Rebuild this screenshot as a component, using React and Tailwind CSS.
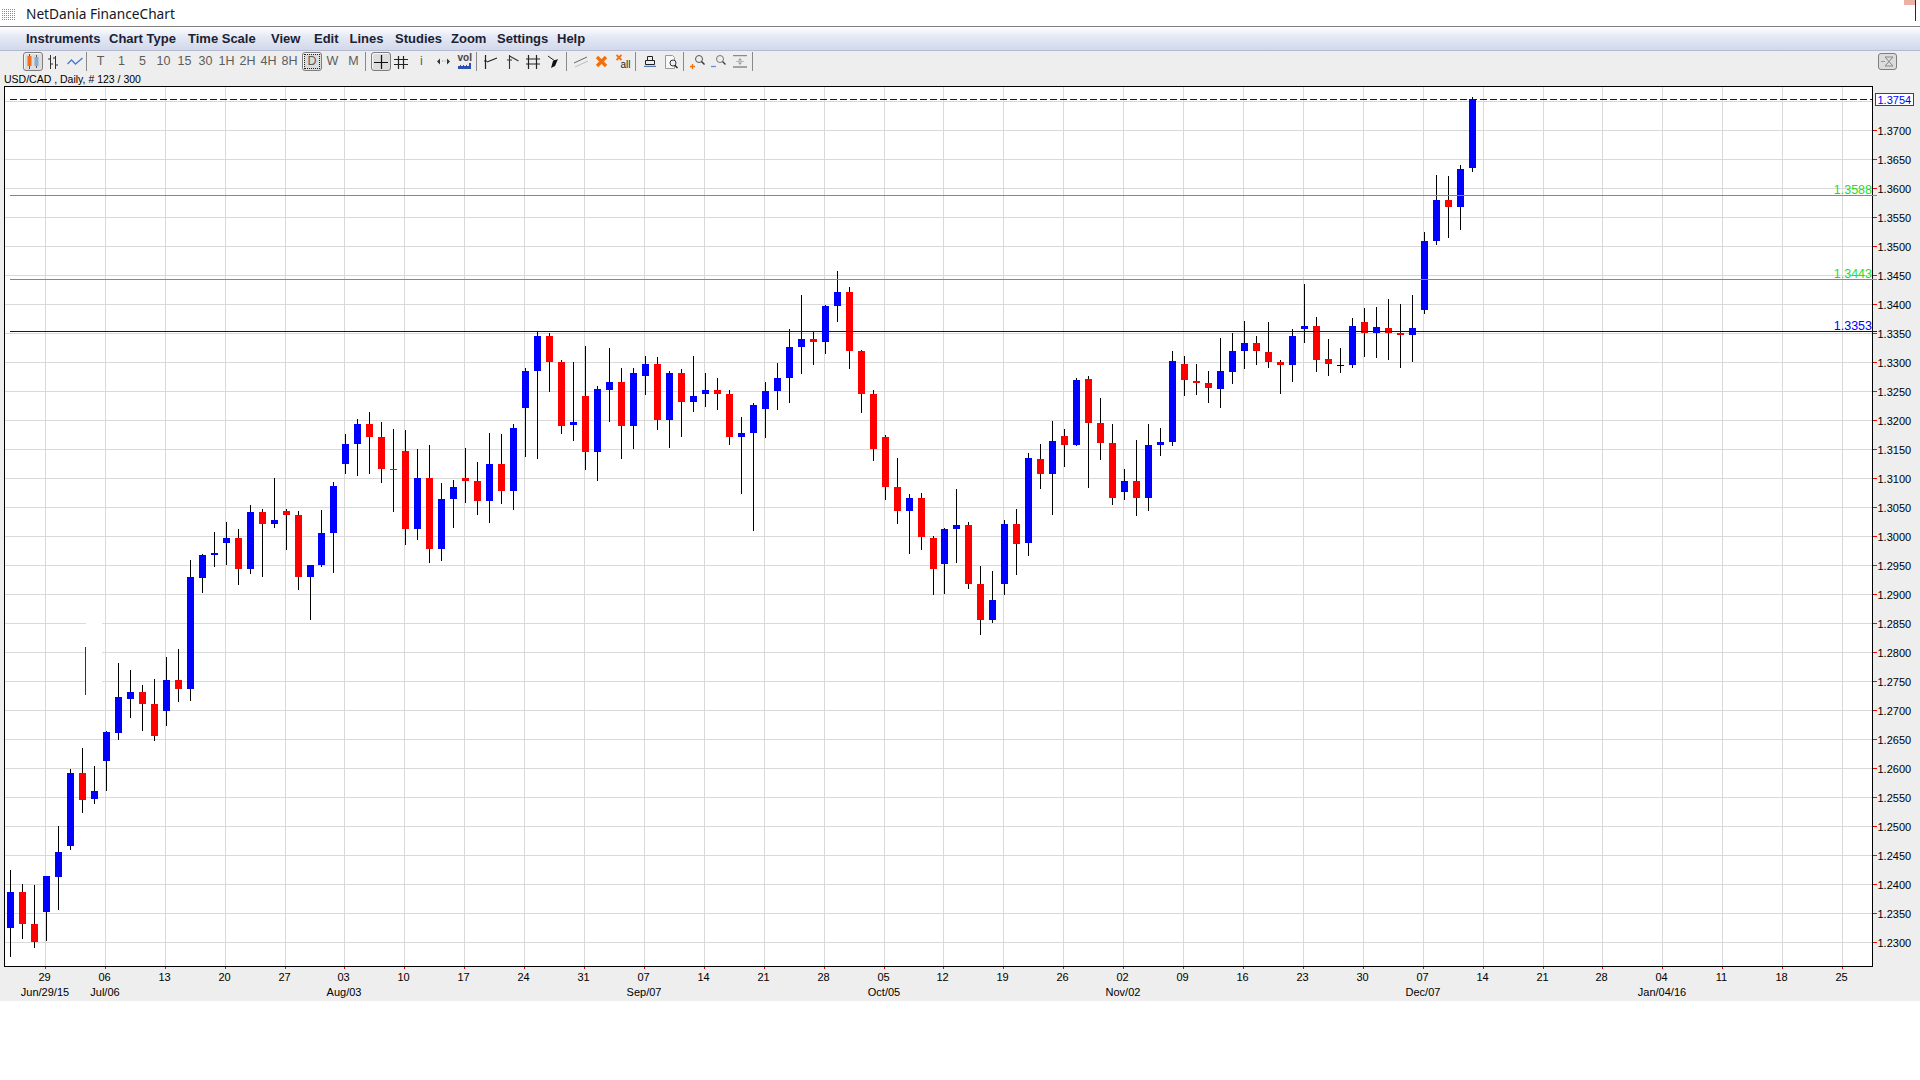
import React from "react";

// candle data: [wick x, wick top, wick bottom, body top, body bottom, colour] in 3x crop units
const seg = [
  { ox: 0, oy: 500, d: [
    [31,1110,1370,1176,1283,"b"],[67,1152,1316,1176,1271,"r"],[103,1155,1343,1272,1325,"r"],[139,1128,1322,1128,1235,"b"],
    [175,978,1229,1056,1130,"b"],[211,807,1049,819,1037,"b"],[247,744,938,819,899,"r"],[283,798,911,873,896,"b"],
    [319,693,872,696,782,"b"],[355,489,719,591,698,"b"],[391,510,653,576,596,"b"],[427,555,692,576,611,"r"],
    [463,537,722,612,707,"r"],[499,471,677,540,632,"b"],[535,447,605,540,566,"r"],[571,180,602,231,566,"b"],
    [607,162,278,165,233,"b"],[643,96,200,159,165,"b"],[679,66,194,114,129,"b"],[715,87,254,114,206,"r"],
    [751,15,221,36,206,"b"],[787,27,230,36,71,"r"],[823,-66,83,60,72,"b"],[859,27,149,33,44,"r"],
    [895,33,269,45,230,"r"],[931,195,359,195,230,"b"],[964,30,200,99,194,"b"],[1000,-54,218,-42,98,"b"],
  ]},
  { ox: 320, oy: 320, d: [
    [76,342,462,372,432,"b"],[112,297,468,312,372,"b"],[148,276,462,312,351,"r"],[184,306,489,351,447,"r"],
    [220,327,576,447,450,"r"],[256,330,675,393,627,"r"],[292,387,660,474,627,"b"],[328,375,729,474,687,"r"],
    [364,489,723,537,687,"b"],[400,480,624,501,537,"b"],[436,384,549,474,483,"r"],[472,426,585,483,543,"r"],
    [508,339,609,432,543,"b"],[544,342,552,432,513,"r"],[580,312,570,324,513,"b"],[616,144,411,153,264,"b"],
    [652,36,417,48,153,"b"],[688,39,216,48,126,"r"],[724,120,342,126,318,"r"],[760,126,363,306,315,"b"],
    [796,78,450,228,396,"r"],[832,198,483,207,396,"b"],[868,84,306,186,210,"b"],[904,144,417,186,318,"r"],
    [940,144,387,159,318,"b"],[976,108,225,132,168,"b"],[1012,111,330,132,300,"r"],[1048,153,384,159,300,"b"],
    [1084,147,351,159,246,"r"],[1120,108,276,228,246,"b"],[1156,159,261,210,222,"b"],[1192,174,270,210,222,"r"],
  ]},
  { ox: 700, oy: 260, d: [
    [88,390,555,402,531,"r"],[124,471,702,519,531,"b"],[160,429,813,435,519,"b"],[196,366,534,393,447,"b"],
    [232,309,450,354,393,"b"],[268,207,429,261,354,"b"],[304,105,342,237,261,"b"],[340,216,315,237,246,"r"],
    [376,135,282,138,246,"b"],[412,33,186,96,138,"b"],[448,81,327,96,273,"r"],[484,270,459,273,402,"r"],
    [520,390,603,402,567,"r"],[556,525,720,531,681,"r"],[592,594,792,681,753,"r"],[628,702,882,714,753,"b"],
    [664,699,870,714,831,"r"],
  ]},
  { ox: 880, oy: 400, d: [
    [160,408,585,414,507,"r"],[193,384,582,387,492,"b"],[229,267,489,375,387,"b"],[265,366,567,375,552,"r"],
    [301,498,705,552,660,"r"],[337,513,669,600,660,"b"],[373,360,585,372,552,"b"],[409,327,525,372,432,"r"],
    [445,159,468,174,429,"b"],[481,132,267,177,222,"r"],[517,63,345,123,222,"b"],[553,87,201,108,135,"r"],
    [589,-66,138,-60,135,"b"],[625,-72,264,-63,69,"r"],[661,-6,180,69,129,"r"],[697,72,315,129,294,"r"],
    [733,207,300,243,276,"b"],[769,120,348,243,294,"r"],[805,72,333,135,294,"b"],[841,84,168,126,135,"b"],
  ]},
  { ox: 1100, oy: 310, d: [
    [217,123,408,153,396,"b"],[253,138,258,162,210,"r"],[289,162,255,213,219,"r"],[325,183,279,219,234,"r"],
    [361,84,294,183,237,"b"],[397,69,222,123,186,"b"],[433,33,177,99,123,"b"],[469,78,165,99,123,"r"],
    [505,36,174,126,156,"r"],[541,150,252,156,165,"r"],[577,57,216,78,165,"b"],
  ]},
  { ox: 1200, oy: 80, d: [
    [313,612,789,738,747,"b"],[349,711,876,738,840,"r"],[385,777,888,837,852,"r"],[421,804,879,855,858,"k"],
    [457,714,864,738,855,"b"],[493,684,831,726,759,"r"],[529,681,834,741,759,"b"],[565,657,840,744,759,"r"],
    [601,672,864,759,765,"r"],[637,645,846,744,765,"b"],[673,456,702,483,690,"b"],[709,285,495,360,483,"b"],
    [745,288,474,360,381,"r"],[781,255,450,267,381,"b"],[817,51,276,57,264,"b"],
  ]},
];

const candles = seg.flatMap((s) =>
  s.d.map(([x, wt, wb, bt, bb, c]) => ({
    x: Math.floor(s.ox + x / 3),
    wt: Math.round(s.oy + wt / 3),
    wb: Math.round(s.oy + wb / 3),
    bt: Math.round(s.oy + bt / 3),
    bb: Math.round(s.oy + bb / 3),
    c: c === "b" ? "#0000ff" : c === "r" ? "#ff0000" : "#000000",
  }))
);

const gridX = [45,105,165,225,285,344,404,464,524,584,644,704,764,824,884,943,1003,1063,1123,1183,1243,1303,1363,1423,1483,1543,1602,1662,1722,1782,1842];
const dayLabels = ["29","06","13","20","27","03","10","17","24","31","07","14","21","28","05","12","19","26","02","09","16","23","30","07","14","21","28","04","11","18","25"];
const monthLabels = [[45,"Jun/29/15"],[105,"Jul/06"],[344,"Aug/03"],[644,"Sep/07"],[884,"Oct/05"],[1123,"Nov/02"],[1423,"Dec/07"],[1662,"Jan/04/16"]];
const gridY = Array.from({ length: 30 }, (_, k) => 942 - 29 * k);
const priceOf = (k) => (1.23 + 0.005 * k).toFixed(4);

function Chart() {
  return (
    <svg width="1920" height="915" viewBox="0 86 1920 915" className="block" shapeRendering="crispEdges">
      <rect x="4" y="86" width="1869" height="881" fill="#000000" />
      <rect x="5" y="87" width="1867" height="879" fill="#ffffff" />
      {gridY.map((y) => <rect key={y} x="5" y={y} width="1867" height="1" fill="#d9d9d9" />)}
      {gridX.map((x) => <rect key={x} x={x} y="87" width="1" height="879" fill="#d9d9d9" />)}
      <rect x="86" y="616" width="16" height="66" fill="#ffffff" />
      <rect x="85" y="647" width="1" height="48" fill="#24344f" />
      {candles.map((c, i) => (
        <g key={i}>
          <rect x={c.x} y={c.wt} width="1" height={c.wb - c.wt} fill="#000000" />
          <rect x={c.x - 3} y={c.bt} width="7" height={Math.max(1, c.bb - c.bt)} fill={c.c} />
        </g>
      ))}
      <line x1="10" x2="1872" y1="99.5" y2="99.5" stroke="#0000dd" strokeWidth="1" strokeDasharray="7 3" />
      <rect x="10" y="195" width="1867" height="1" fill="#19d419" />
      <rect x="10" y="279" width="1867" height="1" fill="#19d419" />
      <rect x="10" y="331" width="1867" height="1" fill="#0000d8" />
      {gridY.slice(0, 29).map((y) => <rect key={y} x="1873" y={y} width="4" height="1" fill="#ff0000" />)}
      {gridX.map((x) => <rect key={x} x={x} y="967" width="1" height="2" fill="#ff0000" />)}
      <g shapeRendering="auto" fontSize="11" fill="#000000">
        {gridY.slice(0, 29).map((y, k) => <text key={y} x="1877.5" y={y + 5}>{priceOf(k)}</text>)}
        {gridX.map((x, i) => <text key={x} x={x - 0.5} y="981" textAnchor="middle">{dayLabels[i]}</text>)}
        {monthLabels.map(([x, t]) => <text key={t} x={x} y="996" textAnchor="middle">{t}</text>)}
        <text x="1872" y="194" fontSize="12.5" fill="#22e022" textAnchor="end">1.3588</text>
        <text x="1872" y="278" fontSize="12.5" fill="#22e022" textAnchor="end">1.3443</text>
        <text x="1872" y="330" fontSize="12.5" fill="#0000ff" textAnchor="end">1.3353</text>
      </g>
      <rect x="1875.5" y="93.5" width="38" height="12" fill="#ffffff" stroke="#e00000" strokeWidth="1" />
      <text x="1877.5" y="104" fontSize="11" fill="#0000ff" shapeRendering="auto">1.3754</text>
    </svg>
  );
}

const Sep = ({ className = "" }) => <div className={"w-px h-[19px] bg-[#8a8a8a] " + className} />;

const Raised = ({ className = "", children }) => (
  <div className={"h-[19px] w-[20px] flex items-center justify-center rounded-[3px] border border-[#7e7e7e] bg-[#dddddd] shadow-[inset_1px_1px_0_#f6f6f6] " + className}>
    {children}
  </div>
);

const Cell = ({ className = "", children }) => (
  <div className={"h-full flex items-center justify-center text-[12.5px] text-[#5c5c5c] " + className}>{children}</div>
);

const Ico = ({ w = 16, h = 16, children }) => (
  <svg width={w} height={h} viewBox={`0 0 ${w} ${h}`} fill="none">{children}</svg>
);

function Toolbar() {
  return (
    <div className="h-[21px] flex items-center pl-[23px] pr-[23px]">
      <Raised>
        <Ico w={14} h={15}>
          <path d="M3.5 0v15M10.5 1v13" stroke="#555" />
          <rect x="1.5" y="2" width="4" height="10" fill="#f07020" />
          <rect x="8.5" y="3" width="4" height="9" fill="#8aa9d6" />
        </Ico>
      </Raised>
      <Cell className="w-[20px]">
        <Ico w={12} h={14}>
          <path d="M3.5 0v14M8.5 1v13M1 4h2.500M3.500 9h2.500M6 3h2.500M8.500 10h2.500" stroke="#333" />
        </Ico>
      </Cell>
      <Cell className="w-[23px]">
        <Ico w={16} h={10}>
          <path d="M0.500 7l4-4 4 4 7-6" stroke="#4a78c8" strokeWidth="1.300" />
        </Ico>
      </Cell>
      <Sep />
      <div className="ml-[3px] flex h-full">
        {["T","1","5","10","15","30","1H","2H","4H","8H"].map((t) => (
          <Cell key={t} className="w-[21px]">{t}</Cell>
        ))}
      </div>
      <Raised className="ml-[2px] text-[12.5px] text-[#5c5c5c]">
        <div className="w-[16px] h-[15px] border border-dotted border-[#222] flex items-center justify-center leading-none">D</div>
      </Raised>
      <Cell className="w-[21px]">W</Cell>
      <Cell className="w-[21px]">M</Cell>
      <Sep className="ml-px" />
      <Raised className="ml-[5px]">
        <Ico w={16} h={16}>
          <path d="M8.500 1v14M1 8.500h14" stroke="#111" strokeWidth="1.200" />
        </Ico>
      </Raised>
      <Cell className="w-[19px]">
        <Ico w={14} h={14}>
          <path d="M4.500 1v13M9.500 1v13M0 4.500h14M0 9.500h14" stroke="#222" strokeWidth="1.200" />
        </Ico>
      </Cell>
      <Cell className="w-[23px]">i</Cell>
      <Cell className="w-[20px]">
        <Ico w={13} h={7}>
          <path d="M0 3.500l3-3v6zM13 3.500l-3-3v6z" fill="#333" />
          <path d="M5 3h1M7.500 3h1" stroke="#888" />
        </Ico>
      </Cell>
      <Cell className="w-[22px]">
        <div className="relative w-[13px] h-[14px]">
          <span className="absolute -top-[2px] left-0 text-[10px] leading-[10px] font-bold text-[#444]">vol</span>
          <svg className="absolute bottom-0 left-0" width="13" height="6" viewBox="0 0 13 6">
            <path d="M0 6V3h2V2h1v1h2v-1h1v1h2V2h1v1h2V0h2v6z" fill="#2f4fb0" />
          </svg>
        </div>
      </Cell>
      <Sep className="ml-px" />
      <Cell className="ml-[3px] w-[21px]">
        <Ico w={15} h={14}>
          <path d="M2.500 0v14M1 6h3M4 7l10-4" stroke="#222" strokeWidth="1.200" />
        </Ico>
      </Cell>
      <Cell className="w-[21px]">
        <Ico w={15} h={14}>
          <path d="M5.500 0v14M3 5h5M5.500 1l9 5" stroke="#333" strokeWidth="1.100" />
        </Ico>
      </Cell>
      <Cell className="w-[21px]">
        <Ico w={14} h={14}>
          <path d="M2.500 0v14M10.500 0v14M0 4h14M0 9h14" stroke="#222" strokeWidth="1.200" />
        </Ico>
      </Cell>
      <Cell className="w-[20px]">
        <Ico w={12} h={13}>
          <path d="M1 1l7 5" stroke="#222" />
          <path d="M4 13l2-7 5-2-3 7z" fill="#111" />
        </Ico>
      </Cell>
      <Sep className="ml-[3px]" />
      <Cell className="ml-[4px] w-[20px]">
        <Ico w={14} h={12}>
          <path d="M0 7l13-6" stroke="#666" />
          <path d="M1 11l13-6" stroke="#bbb" />
        </Ico>
      </Cell>
      <Cell className="w-[21px]">
        <Ico w={13} h={13}>
          <path d="M2 2l9 9M11 2l-9 9" stroke="#f07010" strokeWidth="3.200" />
        </Ico>
      </Cell>
      <Cell className="w-[21px]">
        <div className="relative w-[14px] h-[15px]">
          <svg className="absolute top-0 left-0" width="6" height="7" viewBox="0 0 6 7">
            <path d="M0.500 1l5 5M5.500 1l-5 5" stroke="#f07010" strokeWidth="1.800" />
          </svg>
          <span className="absolute bottom-[-1px] right-[-1px] text-[10px] leading-[10px] text-[#222]">all</span>
        </div>
      </Cell>
      <Sep className="ml-[2px]" />
      <Cell className="ml-[4px] w-[20px]">
        <Ico w={12} h={11}>
          <path d="M3.500 0.500h5v4h-5zM1.500 4.500h9v4h-9z" stroke="#222" />
          <path d="M0 10.500h12" stroke="#5578b0" strokeWidth="1.400" />
        </Ico>
      </Cell>
      <Cell className="w-[23px]">
        <Ico w={13} h={14}>
          <path d="M0.500 0.500h7l2 2v11h-9z" stroke="#999" fill="#f8f8f8" />
          <circle cx="8" cy="8" r="3" stroke="#333" fill="#eef" />
          <path d="M10 10.500l2.500 2.500" stroke="#222" strokeWidth="1.400" />
        </Ico>
      </Cell>
      <Sep />
      <Cell className="ml-[3px] w-[20px]">
        <Ico w={15} h={15}>
          <circle cx="9" cy="5" r="3.500" stroke="#555" />
          <path d="M11.500 7.500l3 3" stroke="#333" strokeWidth="1.400" />
          <path d="M0 12.500h5M2.500 10v5" stroke="#f07010" strokeWidth="1.300" />
        </Ico>
      </Cell>
      <Cell className="w-[23px]">
        <Ico w={15} h={15}>
          <circle cx="9" cy="5" r="3.500" stroke="#777" />
          <path d="M11.500 7.500l3 3" stroke="#444" strokeWidth="1.400" />
          <path d="M0 12.500h5" stroke="#6a8fd0" strokeWidth="1.300" />
        </Ico>
      </Cell>
      <Cell className="w-[20px]">
        <Ico w={14} h={13}>
          <path d="M0 0.500h14M0 12h14" stroke="#8a8a8a" strokeWidth="1.400" />
          <path d="M7 3l2 2.500H5zM7 10l2-2.500H5z" fill="#999" />
          <path d="M3 6.500h8" stroke="#bbb" />
        </Ico>
      </Cell>
      <Sep className="ml-[2px]" />
      <div className="ml-auto h-[17px] w-[19px] flex items-center justify-center rounded-[3px] border border-[#7e7e7e] bg-[#dcdcdc]">
        <Ico w={13} h={11}>
          <path d="M0 5.500h4" stroke="#999" />
          <path d="M4 1l8 9M12 1l-8 9M4 1h8M4 10h8" stroke="#888" />
        </Ico>
      </div>
    </div>
  );
}

const menu = [
  ["Instruments", "w-[83px]"],
  ["Chart Type", "w-[79px]"],
  ["Time Scale", "w-[83px]"],
  ["View", "w-[43px]"],
  ["Edit", "w-[35.5px]"],
  ["Lines", "w-[45.5px]"],
  ["Studies", "w-[56px]"],
  ["Zoom", "w-[46px]"],
  ["Settings", "w-[60px]"],
  ["Help", "w-[40px]"],
];

export default function App() {
  return (
    <div className="relative w-[1920px] h-[1080px] overflow-hidden bg-white [font-family:'Liberation_Sans',Arial,sans-serif] text-black">
      <div className="h-[26px] flex items-center pt-[2px] bg-white">
        <svg className="ml-[2px]" width="14" height="11" viewBox="0 0 14 11">
          <defs>
            <pattern id="d" width="2" height="2" patternUnits="userSpaceOnUse">
              <rect width="1" height="1" fill="#8c8c8c" />
            </pattern>
          </defs>
          <rect width="14" height="11" fill="url(#d)" />
        </svg>
        <span className="ml-[10px] text-[13.7px] [font-family:'Noto_Sans',sans-serif] text-[#111827]">NetDania FinanceChart</span>
      </div>
      <div className="absolute right-[4px] top-0 w-[12px] h-[5px] bg-[#efb0a4]" />
      <div className="absolute right-[4px] top-0 w-px h-[21px] bg-[#402020]" />
      <div className="h-px bg-[#808080]" />
      <div className="h-[24px] flex items-center pl-[26px] border-b border-[#b3bbd3] bg-linear-to-b from-white via-[#e6eaf6] via-40% to-[#d2d8ea] text-[13px] font-bold text-[#1a2233]">
        {menu.map(([t, m]) => <span key={t} className={"whitespace-nowrap " + m}>{t}</span>)}
      </div>
      <div className="bg-[#eeeeee] h-[950px] flex flex-col">
        <Toolbar />
        <div className="h-[14px] flex items-center pl-[4px] text-[10.5px] leading-none">USD/CAD , Daily, # 123 / 300</div>
        <Chart />
      </div>
    </div>
  );
}
